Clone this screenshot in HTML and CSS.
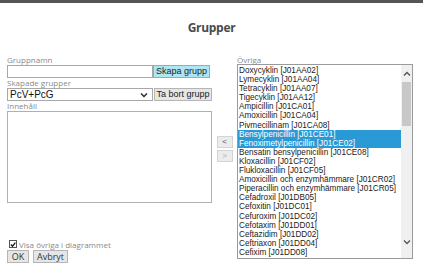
FILE: index.html
```html
<!DOCTYPE html>
<html lang="sv">
  <head>
    <meta charset="UTF-8" />
    <title>Grupper</title>
    <link rel="stylesheet" href="styles.css">
  </head>
  <body>
    <div class="topbar"></div>
    <h1 class="titel">Grupper</h1>

    <div class="dialog">
      <!-- Vänster -->
      <div class="vanster">
        <label class="etikett forsta">Gruppnamn</label>
        <div class="rad">
          <input type="text" class="falt" />
          <button class="knapp knapp-bla">Skapa grupp</button>
        </div>
        <label class="etikett">Skapade grupper</label>
        <div class="rad">
          <div class="falt valj">
            <span>PcV+PcG</span>
            <svg width="8" height="6" viewBox="0 0 8 6"><path d="M1 1.5 L4 4.5 L7 1.5" fill="none" stroke="#222" stroke-width="1.3"/></svg>
          </div>
          <button class="knapp knapp-gra">Ta bort grupp</button>
        </div>
        <label class="etikett">Innehåll</label>
        <div class="textruta"></div>

        <div class="kryss">
          <span class="ruta">
            <svg width="7" height="7" viewBox="0 0 7 7"><path d="M1 3.5 L3 5.5 L6.2 1.2" fill="none" stroke="#111" stroke-width="1.4"/></svg>
          </span>
          Visa övriga i diagrammet
        </div>
        <div class="knappar">
          <button class="knapp ok">OK</button>
          <button class="knapp avbryt">Avbryt</button>
        </div>
      </div>

      <!-- Flytta -->
      <div class="mitt">
        <button class="pil">&lt;</button>
        <button class="pil pil-av">&gt;</button>
      </div>

      <!-- Höger -->
      <div class="hoger">
        <label class="etikett">Övriga</label>
        <div class="lista">
          <div class="poster">
            <div>Doxycyklin [J01AA02]</div>
            <div>Lymecyklin [J01AA04]</div>
            <div>Tetracyklin [J01AA07]</div>
            <div>Tigecyklin [J01AA12]</div>
            <div>Ampicillin [J01CA01]</div>
            <div>Amoxicillin [J01CA04]</div>
            <div>Pivmecillinam [J01CA08]</div>
            <div class="vald">Bensylpenicillin [J01CE01]</div>
            <div class="vald">Fenoximetylpenicillin [J01CE02]</div>
            <div>Bensatin bensylpenicillin [J01CE08]</div>
            <div>Kloxacillin [J01CF02]</div>
            <div>Flukloxacillin [J01CF05]</div>
            <div>Amoxicillin och enzymhämmare [J01CR02]</div>
            <div>Piperacillin och enzymhämmare [J01CR05]</div>
            <div>Cefadroxil [J01DB05]</div>
            <div>Cefoxitin [J01DC01]</div>
            <div>Cefuroxim [J01DC02]</div>
            <div>Cefotaxim [J01DD01]</div>
            <div>Ceftazidim [J01DD02]</div>
            <div>Ceftriaxon [J01DD04]</div>
            <div>Cefixim [J01DD08]</div>
          </div>
          <div class="rullist">
            <svg class="upp" width="8" height="6" viewBox="0 0 8 6"><path d="M1 4.5 L4 1.5 L7 4.5" fill="none" stroke="#555" stroke-width="1.3"/></svg>
            <div class="tumme"></div>
            <svg class="ner" width="8" height="6" viewBox="0 0 8 6"><path d="M1 1.5 L4 4.5 L7 1.5" fill="none" stroke="#555" stroke-width="1.3"/></svg>
          </div>
        </div>
      </div>
    </div>
  </body>
</html>
```

FILE: styles.css
```css
body {
  margin: 0;
  padding: 0;
  background-color: #fff;
  font-family: "Open Sans", "Noto Sans", sans-serif;
  width: 423px;
  height: 263px;
  overflow: hidden;
}
.topbar {
  height: 3px;
  background-color: #555;
}
.titel {
  margin: 0;
  height: 50px;
  line-height: 50px;
  text-align: center;
  font-size: 12px;
  letter-spacing: -0.3px;
  font-weight: bold;
  color: #4a4a4a;
}
.dialog {
  display: flex;
  padding-left: 7px;
}
.vanster {
  width: 205px;
  display: flex;
  flex-direction: column;
}
.etikett {
  display: block;
  font-size: 8px;
  color: #8a8a8a;
  height: 10px;
  line-height: 10px;
}
.etikett.forsta {
  height: 12px;
  line-height: 14px;
}
.rad {
  display: flex;
  height: 13px;
}
.falt {
  box-sizing: border-box;
  width: 146px;
  height: 13px;
  border: 1px solid #a8a8a8;
  margin: 0;
  padding: 0;
  background: #fff;
}
.valj {
  display: flex;
  justify-content: space-between;
  align-items: center;
  padding: 0 4px 0 2px;
  font-family: "Liberation Sans", Arial, sans-serif;
  font-size: 10px;
  color: #111;
}
.knapp {
  box-sizing: border-box;
  height: 13px;
  margin: 0;
  padding: 0;
  border: 1px solid #b5b5b5;
  background-color: #e6e6e6;
  font-family: "Liberation Sans", Arial, sans-serif;
  font-size: 9px;
  color: #222;
  line-height: 11px;
  white-space: nowrap;
}
.knapp-bla {
  width: 57px;
  background-color: #aee6f4;
  border-color: #5cc1dd;
}
.knapp-gra {
  width: 58px;
  margin-left: 1px;
}
.textruta {
  box-sizing: border-box;
  height: 92px;
  border: 1px solid #b0b0b0;
}
.kryss {
  display: flex;
  align-items: center;
  margin-top: 37px;
  margin-left: 2px;
  height: 8px;
  font-size: 8px;
  color: #8a8a8a;
}
.ruta {
  box-sizing: border-box;
  width: 8px;
  height: 8px;
  border: 1px solid #555;
  margin-right: 2px;
  display: flex;
  align-items: center;
  justify-content: center;
}
.knappar {
  display: flex;
  gap: 4px;
  margin-top: 2px;
}
.knappar .knapp {
  height: 13px;
  font-family: "Open Sans", sans-serif;
  font-size: 9px;
  color: #333;
}
.ok {
  width: 22px;
}
.avbryt {
  width: 35px;
}
.mitt {
  width: 25px;
  display: flex;
  flex-direction: column;
  align-items: center;
  padding-top: 83px;
  gap: 2px;
}
.pil {
  box-sizing: border-box;
  width: 16px;
  height: 12px;
  margin: 0;
  padding: 0;
  border: 1px solid #d4d4d4;
  background-color: #ececec;
  font-size: 8px;
  color: #555;
  line-height: 10px;
}
.pil-av {
  color: #aaa;
}
.hoger {
  width: 176px;
}
.hoger .etikett {
  height: 11px;
  line-height: 13px;
}
.lista {
  box-sizing: border-box;
  height: 195px;
  border: 1px solid #9a9a9a;
  display: flex;
  overflow: hidden;
}
.poster {
  flex: 1;
  min-width: 0;
  overflow: hidden;
  padding-top: 1px;
  font-family: "Liberation Sans", Arial, sans-serif;
  font-size: 8.2px;
  line-height: 9.1px;
  color: #222;
}
.poster div {
  padding-left: 1px;
  white-space: nowrap;
  height: 9.1px;
}
.poster .vald {
  background-color: #2a9ad6;
  color: #fff;
}
.rullist {
  flex: none;
  width: 11px;
  background-color: #f0f0f0;
  display: flex;
  flex-direction: column;
  align-items: center;
}
.upp {
  margin-top: 6px;
}
.tumme {
  width: 9px;
  height: 44px;
  margin-top: 5px;
  background-color: #c8c8c8;
}
.ner {
  margin-top: auto;
  margin-bottom: 13px;
}
```
